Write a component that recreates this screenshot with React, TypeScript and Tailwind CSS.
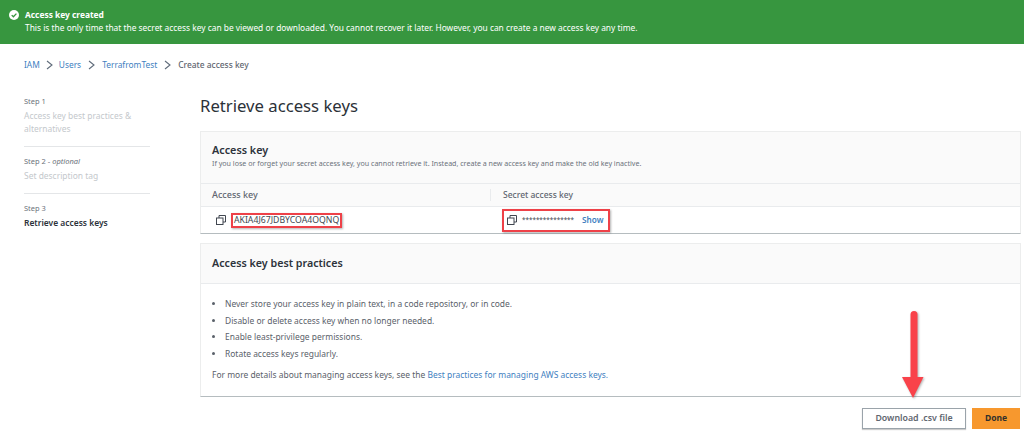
import React from 'react'

function CopyIcon() {
  return (
    <svg width="10" height="10" viewBox="0 0 10 10" fill="none" stroke="#414750" strokeWidth="1" className="shrink-0">
      <rect x="0.5" y="3" width="6.5" height="6.5" />
      <path d="M3 3V0.5H9.5V7H7" />
    </svg>
  )
}

function Chevron() {
  return (
    <svg width="7" height="10" viewBox="0 0 7 10" fill="none" stroke="#5f6b7a" strokeWidth="1.1" className="shrink-0">
      <path d="M1 1l5 4-5 4" />
    </svg>
  )
}

export default function App() {
  return (
    <div className="relative h-[433px] w-[1024px] overflow-hidden bg-white font-['Noto_Sans',sans-serif] text-[#414750]">
      <div className="flex h-[44px] items-start bg-[#37963f] pl-[9px] pt-[8px] text-white">
        <svg width="10" height="10" viewBox="0 0 10 10" className="mt-[2px] shrink-0">
          <circle cx="5" cy="5" r="5" fill="#fff" />
          <path d="M2.7 5.1l1.7 1.7 3-3.2" fill="none" stroke="#37963f" strokeWidth="1.3" />
        </svg>
        <div className="ml-[6px] text-[8.38px] leading-[13px]">
          <div className="font-bold">Access key created</div>
          <div>This is the only time that the secret access key can be viewed or downloaded. You cannot recover it later. However, you can create a new access key any time.</div>
        </div>
      </div>

      <nav className="flex h-[41px] items-center pl-[24px] pt-[1px] text-[8.4px]">
        <span className="text-[#3f7fbf]">IAM</span>
        <span className="mx-[6px]"><Chevron /></span>
        <span className="text-[#3f7fbf]">Users</span>
        <span className="mx-[7px]"><Chevron /></span>
        <span className="text-[#3f7fbf]">TerrafromTest</span>
        <span className="mx-[7px]"><Chevron /></span>
        <span className="font-medium text-[#5f6670]">Create access key</span>
      </nav>

      <div className="flex">
        <aside className="ml-[24px] w-[126px] shrink-0 pt-[10px] text-[8.45px] leading-[13px]">
          <div className="text-[7.5px] text-[#6b727b]">Step 1</div>
          <div className="mt-[1px] w-[120px] text-[#c4c8cc]">Access key best practices & alternatives</div>
          <div className="mb-[8px] mt-[11px] border-t border-[#e4e6e8]" />
          <div className="text-[7.5px] text-[#6b727b]">Step 2 - <i>optional</i></div>
          <div className="mt-[1px] text-[#c4c8cc]">Set description tag</div>
          <div className="mb-[8px] mt-[11px] border-t border-[#e4e6e8]" />
          <div className="text-[7.5px] text-[#6b727b]">Step 3</div>
          <div className="mt-[1px] font-semibold text-[#2d333b]">Retrieve access keys</div>
        </aside>

        <main className="ml-[50px] w-[821px]">
          <h1 className="h-[46px] pt-[9px] text-[16.7px] leading-[24px] text-[#2b3138]">Retrieve access keys</h1>

          <section className="h-[103px] border-x border-t border-[#eceded] border-b border-b-[#b5bcbf] bg-white">
            <div className="h-[51px] bg-[#fafafa] pl-[11px] pt-[10px]">
              <h2 className="text-[10.8px] font-semibold leading-[15px] text-[#2d333b]">Access key</h2>
              <p className="mt-[1px] text-[7.1px] leading-[10px] text-[#6b727b]">If you lose or forget your secret access key, you cannot retrieve it. Instead, create a new access key and make the old key inactive.</p>
            </div>
            <div className="flex h-[24px] items-center border-y border-[#e9ebed] bg-[#fafafa] font-medium text-[#5f6670]">
              <div className="w-[289px] pl-[11px] text-[9px]">Access key</div>
              <div className="border-l border-[#e9ebed] pl-[12px] text-[8.5px]">Secret access key</div>
            </div>
            <div className="flex h-[26px] items-center">
              <div className="flex w-[290px] items-center pl-[15px]">
                <CopyIcon />
                <span className="ml-[5px] border-2 border-[#ee4148] px-[1px] text-[8.7px] leading-[11px] shadow-[1px_1px_2px_rgba(0,0,0,0.3)]">AKIA4J67JDBYCOA4OQNQ</span>
              </div>
              <div className="ml-[11px] flex h-[23px] w-[108px] items-center border-2 border-[#ee4148] pl-[3px] shadow-[1px_1px_2px_rgba(0,0,0,0.3)]">
                <CopyIcon />
                <span className="ml-[5px] text-[6.3px]">***************</span>
                <span className="ml-[8px] text-[8.2px] font-semibold text-[#3f7fbf]">Show</span>
              </div>
            </div>
          </section>

          <section className="mt-[9px] h-[154px] border-x border-t border-[#eceded] border-b border-b-[#b5bcbf]">
            <div className="flex h-[40px] items-center border-b border-[#e9ebed] bg-[#fafafa] pl-[11px]">
              <h2 className="text-[10.7px] font-semibold text-[#2d333b]">Access key best practices</h2>
            </div>
            <ul className="ml-[24px] mt-[12px] list-disc text-[8.45px] leading-[16.7px] text-[#5a616a]">
              <li>Never store your access key in plain text, in a code repository, or in code.</li>
              <li>Disable or delete access key when no longer needed.</li>
              <li>Enable least-privilege permissions.</li>
              <li>Rotate access keys regularly.</li>
            </ul>
            <p className="ml-[11px] mt-[3px] text-[8.45px] leading-[17px] text-[#5a616a]">
              For more details about managing access keys, see the <span className="text-[#3f7fbf]">Best practices for managing AWS access keys.</span>
            </p>
          </section>

          <div className="mr-[1px] mt-[11px] flex justify-end">
            <button className="h-[21px] w-[104px] border border-[#9aa3aa] text-[8.8px] font-semibold text-[#5f6670] shadow-[0_1px_1px_rgba(0,0,0,0.2)]">Download .csv file</button>
            <button className="ml-[6px] h-[21px] w-[48px] bg-[#f7982e] text-[8.5px] font-bold text-[#33302b]">Done</button>
          </div>
        </main>
      </div>

      <svg className="absolute left-[900px] top-[308px] drop-shadow-[1px_1px_1px_rgba(0,0,0,0.3)]" width="36" height="96" viewBox="0 0 36 96">
        <path d="M14 6.5L14 72" stroke="#f9424a" strokeWidth="7" strokeLinecap="round" />
        <path d="M2 69H23.500L13 90Z" fill="#f9424a" />
      </svg>
    </div>
  )
}
